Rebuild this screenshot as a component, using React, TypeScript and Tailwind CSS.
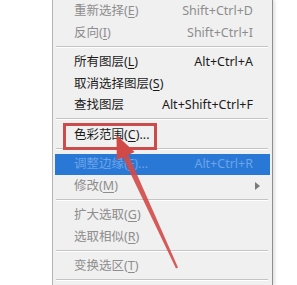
import React from 'react';

type Item = {
  label: string;
  key?: string;
  suffix?: string;
  shortcut?: string;
  disabled?: boolean;
  active?: boolean;
  submenu?: boolean;
};

type Entry = Item | 'sep';

const entries: Entry[] = [
  { label: '重新选择', key: 'E', shortcut: 'Shift+Ctrl+D', disabled: true },
  { label: '反向', key: 'I', shortcut: 'Shift+Ctrl+I', disabled: true },
  'sep',
  { label: '所有图层', key: 'L', shortcut: 'Alt+Ctrl+A' },
  { label: '取消选择图层', key: 'S' },
  { label: '查找图层', shortcut: 'Alt+Shift+Ctrl+F' },
  'sep',
  { label: '色彩范围', key: 'C', suffix: '...' },
  'sep',
  { label: '调整边缘', key: 'F', suffix: '...', shortcut: 'Alt+Ctrl+R', disabled: true, active: true },
  { label: '修改', key: 'M', disabled: true, submenu: true },
  'sep',
  { label: '扩大选取', key: 'G', disabled: true },
  { label: '选取相似', key: 'R', disabled: true },
  'sep',
  { label: '变换选区', key: 'T', disabled: true },
  'sep',
];

function MenuRow({ item }: { item: Item }) {
  const color = item.active
    ? 'text-[#6ba4e8]'
    : item.disabled
      ? 'text-[#8d8d8d]'
      : 'text-[#1b1b1b]';
  return (
    <div
      className={`flex items-center h-[21.5px] pl-[19px] pr-[17px] mx-[2px] ${
        item.active ? 'bg-[#2a78d6]' : ''
      } ${color}`}
    >
      <span className="flex-1 whitespace-nowrap">
        {item.label}
        {item.key && (
          <>
            (<span className="underline underline-offset-2">{item.key}</span>)
          </>
        )}
        {item.suffix}
      </span>
      {item.shortcut && <span className="whitespace-nowrap">{item.shortcut}</span>}
      {item.submenu && (
        <svg width="5" height="8" viewBox="0 0 5 8" className="mr-[-7px]">
          <path d="M0 0 L5 4 L0 8 Z" fill="#7a7a7a" />
        </svg>
      )}
    </div>
  );
}

export default function App() {
  return (
    <div
      className="relative w-[297px] h-[285px] overflow-hidden bg-white flex text-[12.5px] leading-none"
      style={{ fontFamily: '"Noto Sans", "Noto Sans CJK SC", sans-serif' }}
    >
      {/* Select menu */}
      <div className="ml-[52px] w-[221px] h-full pt-[1px] bg-[#f0f0f0] border-l border-[#b4b4b4] border-r border-r-[#8e8e8e] shadow-[2px_0_3px_rgba(0,0,0,0.12)] flex flex-col">
        {entries.map((e, i) =>
          e === 'sep' ? (
            <div key={i} className="h-[8px] pt-[2px] pl-[3px] pr-[4px] shrink-0">
              <div className="h-px bg-[#c4c4c4]" />
              <div className="h-px bg-white" />
            </div>
          ) : (
            <MenuRow key={i} item={e} />
          )
        )}
      </div>

      {/* Annotation: red box */}
      <div className="absolute left-[63px] top-[123px] w-[94px] h-[27px] border-[3px] border-[#cc4b4b]" />

      {/* Annotation: red arrow */}
      <svg className="absolute inset-0" width="297" height="285" viewBox="0 0 297 285">
        <polygon
          points="128.2,154.5 122.6,157 176,268.5 178,267.6"
          fill="#d24a48"
          opacity="0.9"
        />
        <polygon points="116.5,135 134.6,152 116.8,160" fill="#d24a48" />
      </svg>
    </div>
  );
}
